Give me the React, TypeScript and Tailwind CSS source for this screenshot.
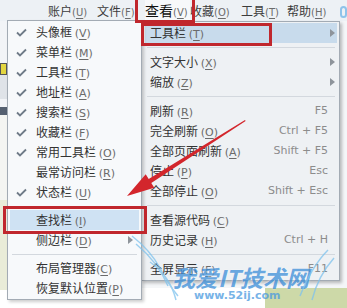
import type { FC } from 'react'

type MenuItem =
    | { sep: true }
    | {
          sep?: false
          label: string
          hotkey: string
          tight?: boolean
          checked?: boolean
          shortcut?: string
          sub?: boolean
          active?: boolean
      }

const toolbarItems: MenuItem[] = [
    { label: '头像框', hotkey: 'V', checked: true },
    { label: '菜单栏', hotkey: 'M', checked: true },
    { label: '工具栏', hotkey: 'T', checked: true },
    { label: '地址栏', hotkey: 'A', checked: true },
    { label: '搜索栏', hotkey: 'S', checked: true },
    { label: '收藏栏', hotkey: 'F', checked: true },
    { label: '常用工具栏', hotkey: 'O', checked: true },
    { label: '最常访问栏', hotkey: 'R' },
    { label: '状态栏', hotkey: 'U', checked: true },
    { sep: true },
    { label: '查找栏', hotkey: 'I', active: true },
    { label: '侧边栏', hotkey: 'D', sub: true },
    { sep: true },
    { label: '布局管理器', hotkey: 'C', tight: true },
    { label: '恢复默认位置', hotkey: 'P', tight: true },
]

const viewItems: MenuItem[] = [
    { label: '工具栏', hotkey: 'T', sub: true, active: true },
    { sep: true },
    { label: '文字大小', hotkey: 'X', sub: true },
    { label: '缩放', hotkey: 'Z', sub: true },
    { sep: true },
    { label: '刷新', hotkey: 'R', shortcut: 'F5' },
    { label: '完全刷新', hotkey: 'O', shortcut: 'Ctrl + F5' },
    { label: '全部页面刷新', hotkey: 'A', shortcut: 'Shift + F5' },
    { label: '停止', hotkey: 'P', shortcut: 'Esc' },
    { label: '全部停止', hotkey: 'O', shortcut: 'Shift + Esc' },
    { sep: true },
    { label: '查看源代码', hotkey: 'C' },
    { label: '历史记录', hotkey: 'H', shortcut: 'Ctrl + H' },
    { sep: true },
    { label: '全屏显示', hotkey: 'F', shortcut: 'F11' },
]

const topMenus = [
    { label: '账户', hotkey: 'U', w: 'w-[49px]' },
    { label: '文件', hotkey: 'F', w: 'w-[48px]' },
    { label: '查看', hotkey: 'V', w: 'w-[45px]', open: true },
    { label: '收藏', hotkey: 'O', w: 'w-[51px]' },
    { label: '工具', hotkey: 'T', w: 'w-[46px]' },
    { label: '帮助', hotkey: 'H', w: 'w-[52px]' },
]

const Hotkey: FC<{ k: string; small?: boolean }> = ({ k, small }) => (
    <span
        className={`font-['DejaVu_Sans',sans-serif] ${small ? 'text-[10px]' : 'text-[11px]'} text-[#6b6b6b]`}
    >
        (<span className="underline underline-offset-2">{k}</span>)
    </span>
)

const Check = () => (
    <svg width="11" height="9" viewBox="0 0 11 9" className="absolute left-[6px] top-[6px]">
        <polyline points="1,4.5 4,7.5 10,1.5" fill="none" stroke="#6f7b88" strokeWidth="1.8" />
    </svg>
)

const SubArrow: FC<{ className: string }> = ({ className }) => (
    <svg width="5" height="8" viewBox="0 0 5 8" className={className}>
        <polygon points="0,0 5,4 0,8" fill="#8e949b" />
    </svg>
)

const Menu: FC<{ items: MenuItem[]; side: 'left' | 'right' }> = ({ items, side }) => {
    const isLeft = side === 'left'
    return (
        <div className="flex flex-col">
            {items.map((item, i) =>
                item.sep ? (
                    <div key={i} className={`${isLeft ? 'h-[8px]' : 'h-[9px]'} flex items-center px-[2px]`}>
                        <div className="h-px w-full bg-[#d3d8de]" />
                    </div>
                ) : (
                    <div
                        key={i}
                        className={`relative h-[20px] leading-[20px] whitespace-nowrap text-[12px] text-[#333] ${
                            isLeft ? 'pl-[26px]' : 'pl-[5px]'
                        } ${item.active ? (isLeft ? 'bg-[#cfe2f3]' : 'bg-[#c8dbec]') : ''}`}
                    >
                        {item.checked && <Check />}
                        <span>{item.label}</span>
                        {!item.tight && ' '}
                        <Hotkey k={item.hotkey} />
                        {item.shortcut && (
                            <span className="absolute right-[9px] top-0 font-['DejaVu_Sans',sans-serif] text-[11px] text-[#8c8c8c]">
                                {item.shortcut}
                            </span>
                        )}
                        {item.sub && (
                            <SubArrow className={`absolute top-[6px] ${isLeft ? 'right-[6px]' : 'right-[2px]'}`} />
                        )}
                    </div>
                )
            )}
        </div>
    )
}

const App: FC = () => {
    return (
        <div className="relative w-[347px] h-[308px] overflow-hidden bg-white font-['Noto_Sans_CJK_SC',sans-serif]">
            {/* top menu bar */}
            <div className="flex h-[21px] items-center bg-[#edf1f5] pl-[48px] text-[12px] text-[#3c3c3c]">
                {topMenus.map((m) => (
                    <div
                        key={m.label}
                        className={`${m.w} shrink-0 whitespace-nowrap ${
                            m.open ? 'h-full bg-[#f7f8fa] text-[14px] leading-[20px] text-[#111]' : ''
                        }`}
                    >
                        {m.label}
                        <Hotkey k={m.hotkey} small />
                    </div>
                ))}
                <div className="ml-[1px] mt-[2px] h-[12px] w-[12px] rounded-full border-2 border-[#8fc3ea]" />
            </div>

            {/* page behind the menus */}
            <div className="flex h-[287px]">
                <div className="flex w-[7px] flex-col">
                    <div className="h-[42px] bg-[#f2f4f7]" />
                    <div className="h-[12px] border border-[#555] bg-[#e3d640]" />
                    <div className="h-[24px] bg-[#dfe3e8]" />
                    <div className="h-[8px] bg-[#f2f4f7]" />
                    <div className="h-[8px] bg-[#556070]" />
                    <div className="h-[85px] bg-[#f4f5f2]" />
                    <div className="h-[90px] bg-[#e9ecd8]" />
                    <div className="flex-1 bg-white" />
                </div>
                <div className="flex flex-1 flex-col">
                    <div className="flex-1 bg-[#f4f6f8]" />
                    <div className="flex h-[20px]">
                        <div className="flex-1 bg-white" />
                        <div className="w-[82px] bg-[#cdd9a8]" />
                    </div>
                </div>
            </div>

            {/* 查看 dropdown */}
            <div className="absolute left-[141px] top-[21px] z-10 w-[199px] border border-[#a3abb4] bg-[#eef1f4] px-[3px] pr-[2px] py-[1px] shadow-[2px_2px_3px_rgba(0,0,0,0.25)]">
                <Menu items={viewItems} side="right" />
            </div>

            {/* 工具栏 submenu */}
            <div className="absolute left-[7px] top-[20px] z-20 w-[135px] border border-[#a3abb4] bg-[#f7f9fb] px-[2px] py-[1px] shadow-[2px_2px_3px_rgba(0,0,0,0.2)]">
                <Menu items={toolbarItems} side="left" />
            </div>

            {/* watermark */}
            <div className="pointer-events-none absolute left-[172px] top-[264px] z-30 flex flex-col items-start opacity-75">
                <span className="text-[23px] font-bold italic leading-[26px] text-[#3d8fd9] [text-shadow:0_0_2px_#fff]">
                    我爱IT技术网
                </span>
                <span className="ml-[22px] font-['DejaVu_Sans',sans-serif] text-[11px] font-bold leading-[12px] text-[#4a9ae0]">
                    www.52ij.com
                </span>
            </div>
            <svg className="pointer-events-none absolute left-0 top-0 z-30" width="347" height="308">
                <g fill="none" stroke="#7fc3ee" strokeWidth="1.5" opacity="0.75">
                    <path d="M132 236 Q150 250 160 268 Q168 284 178 296" />
                    <path d="M136 244 Q158 262 168 286" />
                    <path d="M150 262 Q170 276 176 300" />
                    <path d="M328 250 Q312 266 300 296" />
                    <path d="M334 258 Q318 276 312 300" />
                </g>
            </svg>

            {/* red annotation boxes */}
            <div className="absolute left-[135px] top-[-3px] z-40 h-[26px] w-[60px] border-[3px] border-[#c0272d]" />
            <div className="absolute left-[141px] top-[23px] z-40 h-[23px] w-[131px] border-[3px] border-[#c0272d]" />
            <div className="absolute left-[3px] top-[206px] z-40 h-[28px] w-[144px] border-[3px] border-[#c0272d]" />

            {/* red arrow */}
            <svg className="pointer-events-none absolute left-0 top-0 z-40" width="347" height="308">
                <polygon
                    points="245,120 148.7,178.9 145.7,174.2 127,196 154.3,187.8 151.3,183.1 245.6,120.9"
                    fill="#d3262c"
                />
            </svg>
        </div>
    )
}

export default App
